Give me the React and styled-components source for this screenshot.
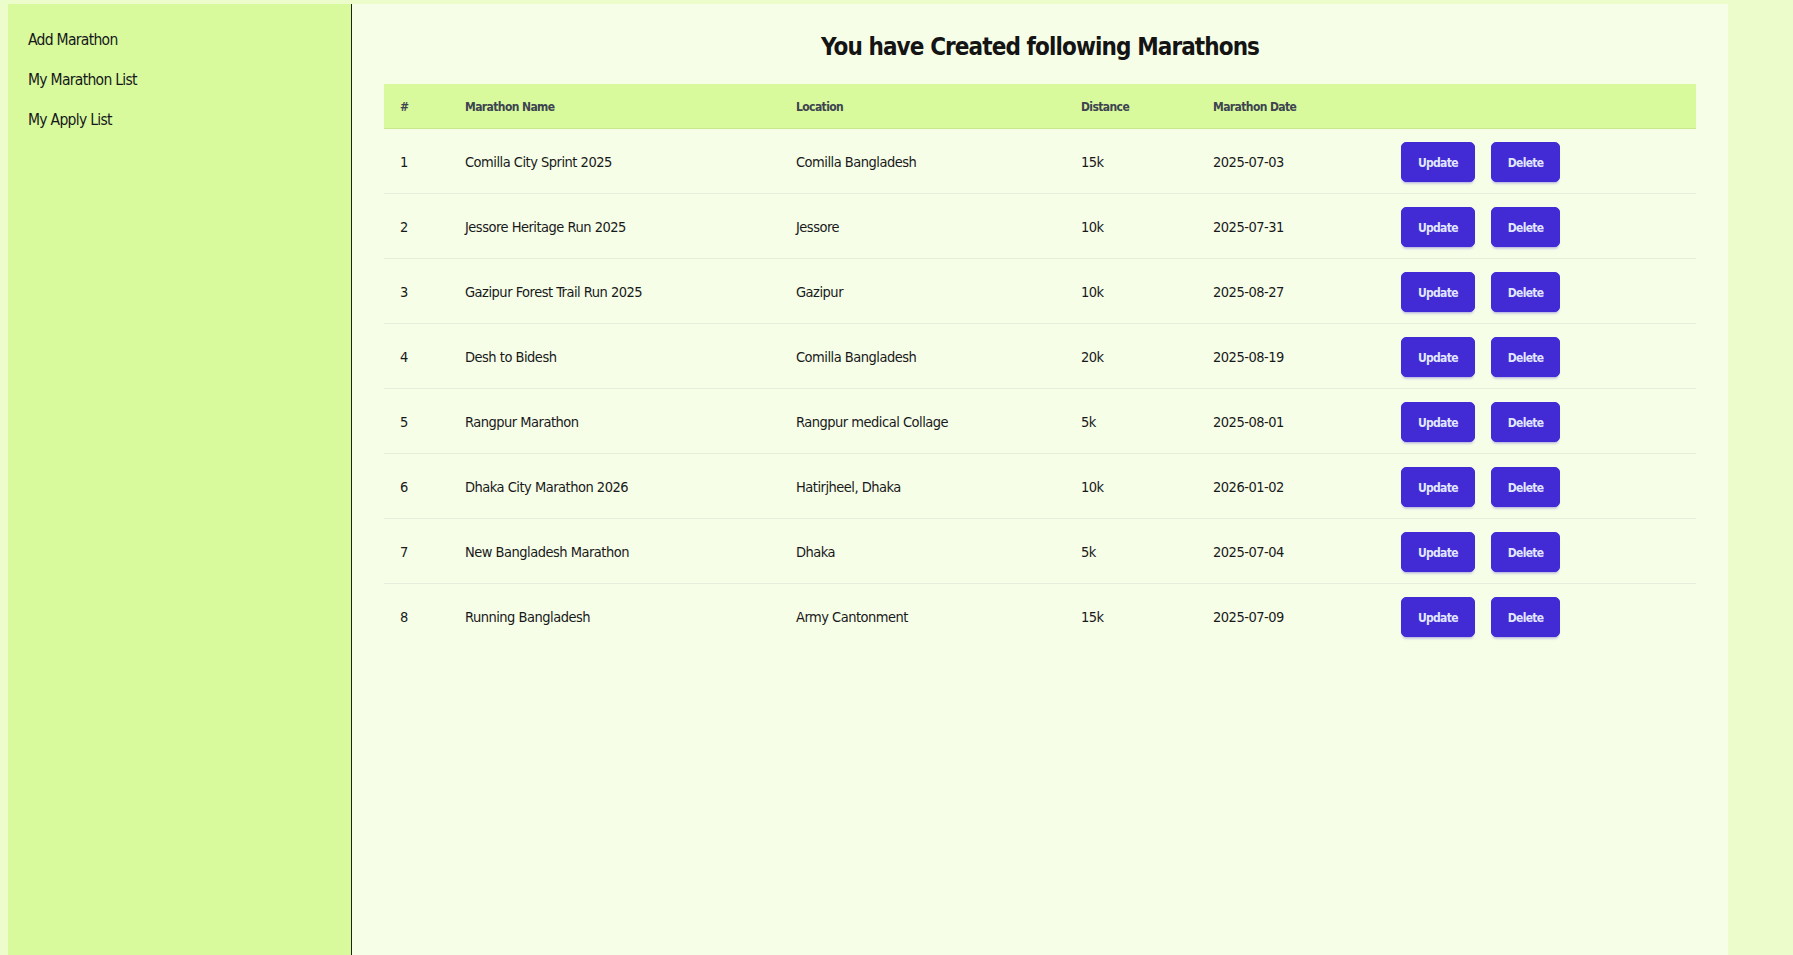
import React from "react";
import styled, { createGlobalStyle } from "styled-components";

const GlobalStyle = createGlobalStyle`
  html, body {
    margin: 0;
    padding: 0;
    background: #ecfccb;
  }
  body {
    padding: 4px 8px 0;
    font-family: "DejaVu Sans Condensed", "Liberation Sans Narrow", "Liberation Sans", sans-serif;
    color: #1a1d1a;
  }
  * { box-sizing: border-box; }
`;

const Shell = styled.div`
  display: flex;
  width: 1720px;
  min-height: calc(100vh - 4px);
`;

const Sidebar = styled.nav`
  width: 344px;
  flex: 0 0 344px;
  background: #d9f99d;
  border-right: 1px solid #1c2418;
  padding: 16px 0;
  display: flex;
  flex-direction: column;
`;

const NavItem = styled.a`
  display: block;
  padding: 8px 20px;
  font-size: 15.5px;
  letter-spacing: -0.7px;
  line-height: 24px;
  color: #15181a;
  text-decoration: none;
  cursor: pointer;
`;

const Main = styled.main`
  flex: 1;
  background: #f7fee7;
  padding: 25px 32px 32px;
`;

const Title = styled.h1`
  margin: 0 0 19px;
  text-align: center;
  font-size: 24px;
  letter-spacing: -0.9px;
  line-height: 36px;
  font-weight: 700;
  color: #141414;
`;

const Table = styled.table`
  width: 100%;
  border-collapse: collapse;
  table-layout: fixed;
`;

const Col = styled.col`
  width: ${(p) => p.$w}px;
`;

const HeadRow = styled.tr`
  background: #d9f99d;
  border-bottom: 1px solid #c9e98a;
`;

const Th = styled.th`
  text-align: left;
  padding: 13px 16px 11px;
  font-size: 12px;
  letter-spacing: -0.6px;
  line-height: 20px;
  font-weight: 700;
  color: #3d4450;
`;

const Row = styled.tr`
  border-bottom: ${(p) => (p.$last ? "none" : "1px solid #e6eddb")};
`;

const Td = styled.td`
  padding: 13px 16px 11px;
  font-size: 14.5px;
  letter-spacing: -0.5px;
  line-height: 24px;
  color: #17191b;
  vertical-align: middle;
`;

const ActionCell = styled.td`
  padding: 13px 16px 11px;
  vertical-align: middle;
`;

const Actions = styled.div`
  display: flex;
  gap: 16px;
`;

const Button = styled.button`
  height: 40px;
  padding: 2px 16px 0;
  border: 1px solid #422ad5;
  border-radius: 5px;
  background: #422ad5;
  color: #e0e7ff;
  font-family: inherit;
  font-size: 12px;
  letter-spacing: -0.7px;
  font-weight: 700;
  cursor: pointer;
  box-shadow: 0 3px 3px -2px rgba(66, 42, 213, 0.45);
`;

const marathons = [
  ["Comilla City Sprint 2025", "Comilla Bangladesh", "15k", "2025-07-03"],
  ["Jessore Heritage Run 2025", "Jessore", "10k", "2025-07-31"],
  ["Gazipur Forest Trail Run 2025", "Gazipur", "10k", "2025-08-27"],
  ["Desh to Bidesh", "Comilla Bangladesh", "20k", "2025-08-19"],
  ["Rangpur Marathon", "Rangpur medical Collage", "5k", "2025-08-01"],
  ["Dhaka City Marathon 2026", "Hatirjheel, Dhaka", "10k", "2026-01-02"],
  ["New Bangladesh Marathon", "Dhaka", "5k", "2025-07-04"],
  ["Running Bangladesh", "Army Cantonment", "15k", "2025-07-09"],
];

const colWidths = [65, 331, 285, 132, 188, 311];

export default function App() {
  return (
    <>
      <GlobalStyle />
      <Shell>
        <Sidebar>
          <NavItem>Add Marathon</NavItem>
          <NavItem>My Marathon List</NavItem>
          <NavItem>My Apply List</NavItem>
        </Sidebar>
        <Main>
          <Title>You have Created following Marathons</Title>
          <Table>
            <colgroup>
              {colWidths.map((w, i) => (
                <Col key={i} $w={w} />
              ))}
            </colgroup>
            <thead>
              <HeadRow>
                <Th>#</Th>
                <Th>Marathon Name</Th>
                <Th>Location</Th>
                <Th>Distance</Th>
                <Th>Marathon Date</Th>
                <Th></Th>
              </HeadRow>
            </thead>
            <tbody>
              {marathons.map(([name, loc, dist, date], i) => (
                <Row key={i} $last={i === marathons.length - 1}>
                  <Td>{i + 1}</Td>
                  <Td>{name}</Td>
                  <Td>{loc}</Td>
                  <Td>{dist}</Td>
                  <Td>{date}</Td>
                  <ActionCell>
                    <Actions>
                      <Button>Update</Button>
                      <Button>Delete</Button>
                    </Actions>
                  </ActionCell>
                </Row>
              ))}
            </tbody>
          </Table>
        </Main>
      </Shell>
    </>
  );
}
